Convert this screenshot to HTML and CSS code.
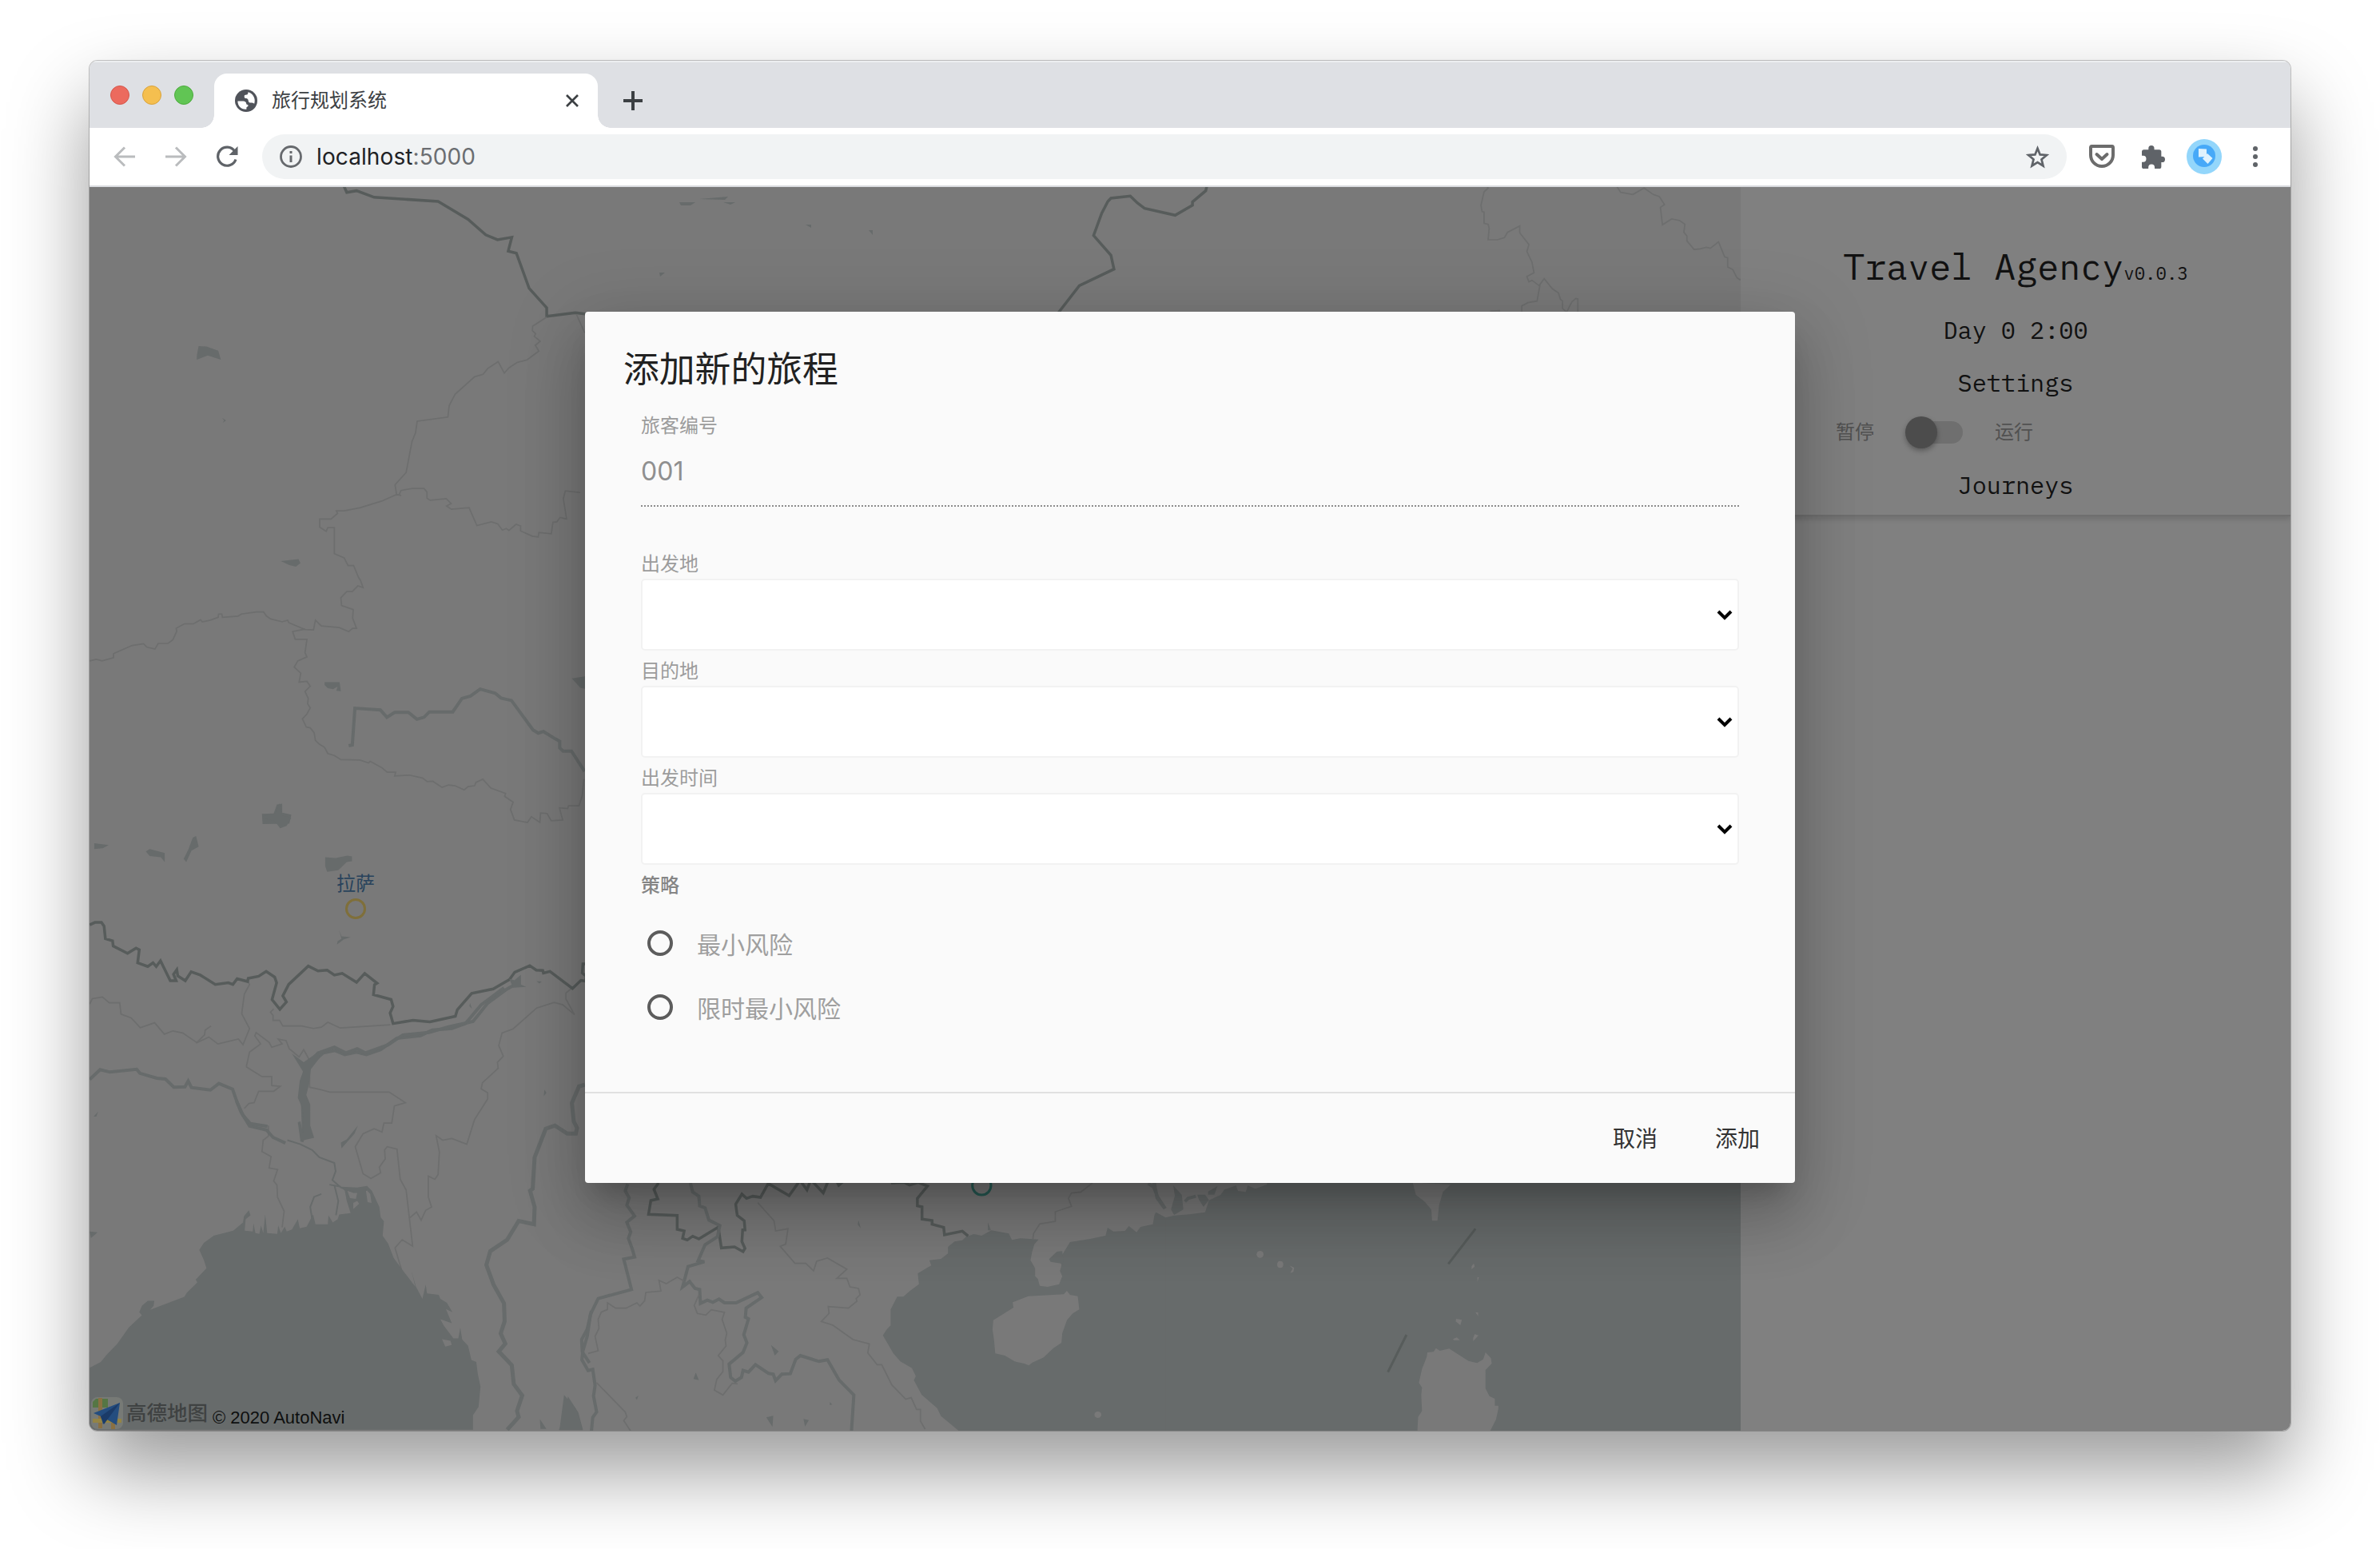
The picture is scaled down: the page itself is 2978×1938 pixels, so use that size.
FILE: index.html
```html
<!DOCTYPE html>
<html lang="zh-CN">
<head>
<meta charset="utf-8">
<title>旅行规划系统</title>
<link rel="stylesheet" href="styles.css">
</head>
<body>
<div class="window">
  <header class="tabstrip">
    <div class="lights"><i class="light red"></i><i class="light yellow"></i><i class="light green"></i></div>
    <div class="tab">
      <svg class="favicon" viewBox="0 0 28 28"><circle cx="14" cy="14" r="14" fill="#50535a"/><path d="M3.4 14.5h6.8c2.6.2 4 1.3 4 3.2 0 1.6 2 .6 2.400 2.300.2 1.500-2.200 1.200-2.200 3v1.700C8 25.400 3.300 20.500 3.400 14.500zM16.500 3.300c-.4 2.200-.2 2.900-1.900 3.200-2.300.3-2.800.2-2.900 2.300 0 1.700.5 2.200 2.500 2.300 2 .2 2.500 1.900 2.600 3.400.3 2.300 2.600 2 4.100 2 2 0 2.900.9 3.200 1.600C26.400 11.500 22.500 4.500 16.500 3.300z" fill="#fff"/></svg>
      <span class="tab-title">旅行规划系统</span>
      <svg class="close" viewBox="0 0 18 18"><path d="M2 2l14 14M16 2L2 16" stroke="#3c4043" stroke-width="2.700"/></svg>
    </div>
    <svg class="plus" viewBox="0 0 24 24"><path d="M12 0v24M0 12h24" stroke="#3c4043" stroke-width="4"/></svg>
  </header>
  <div class="toolbar">
    <svg class="nav" viewBox="0 0 28 28"><path d="M27 14H3M14 2.500L2.500 14 14 25.500" fill="none" stroke="#babcbe" stroke-width="3"/></svg>
    <svg class="nav" viewBox="0 0 28 28"><path d="M1 14h24M14 2.500L25.500 14 14 25.500" fill="none" stroke="#babcbe" stroke-width="3"/></svg>
    <svg class="nav" viewBox="0 0 28 28"><path d="M23.500 7A11.500 11.500 0 1 0 25 17.500" fill="none" stroke="#5f6368" stroke-width="3.200"/><path d="M27.500 1v11h-11z" fill="#5f6368"/></svg>
    <div class="omnibox">
      <svg class="info" viewBox="0 0 28 28"><circle cx="14" cy="14" r="12.500" fill="none" stroke="#66696d" stroke-width="2.800"/><path d="M14 12.500V21M14 7v3" stroke="#66696d" stroke-width="3"/></svg>
      <span class="url">localhost<span class="port">:5000</span></span>
      <svg class="star" viewBox="0 0 28 28"><path d="M14 3.500l3 7.500 8 .6-6.200 5.200 2 7.800L14 20.300l-6.800 4.300 2-7.800L3 11.600l8-.6z" fill="none" stroke="#5f6368" stroke-width="2.600"/></svg>
    </div>
    <svg class="pocket" viewBox="0 0 32 30"><path d="M3.500 2h25A1.700 1.700 0 0 1 30 3.700V13a14 14 0 0 1-28 0V3.700A1.700 1.700 0 0 1 3.500 2z" fill="none" stroke="#6c6c6c" stroke-width="4"/><path d="M9.500 12l6.500 6 6.500-6" fill="none" stroke="#6c6c6c" stroke-width="4" stroke-linecap="round" stroke-linejoin="round"/></svg>
    <svg class="puzzle" viewBox="0 0 28 28"><path d="M2.500 5H8V3.500a3.500 3.500 0 0 1 7 0V5h6a2.500 2.500 0 0 1 2.500 2.500v5.800h1a3.500 3.500 0 0 1 0 7h-1V25.500A2.500 2.500 0 0 1 21 28h-5.500v-1.500a3.800 3.800 0 0 0-7.600 0V28H2.500A2.500 2.500 0 0 1 0 25.500V20h1.500a3.800 3.800 0 0 0 0-7.600H0V7.500A2.500 2.500 0 0 1 2.500 5z" fill="#5f6368"/></svg>
    <svg class="avatar" viewBox="0 0 44 44"><circle cx="22" cy="22" r="22" fill="#93d6fb"/><circle cx="22" cy="21" r="14" fill="#47a9f8"/><path d="M15 12l10 .5v9.500l-10 .5z" fill="#dff2fd"/><path d="M26 18l6.500 6-6 7-6.500-6.500z" fill="#dff2fd"/></svg>
    <svg class="menu" viewBox="0 0 6 26"><g fill="#5f6368"><circle cx="3" cy="3" r="3"/><circle cx="3" cy="13" r="3"/><circle cx="3" cy="23" r="3"/></g></svg>
  </div>
  <main class="page">
    <div class="map">
      <svg class="map-art" viewBox="112 234 2066 1556">
        <!-- north-west -->
        <g transform="translate(100 230) scale(.40816 .5102)">
          <path class="border" d="M809 5l9 16 30-4 54 16 196 10 92 44 54 38 36 12 44-6-11 34 25 5 39 86 54 48v21l88-9 40 4"/>
          <path class="prov" d="M1431 327l-43 22-1 11 10 8-4 6 18 12-15 10 11 14-37 22-30 6-26 14-13 12-19-28-32 17-14 14-26 6-60 43-18 28-4 28-94 10-5 28-11 22-18 76-34 30 5 25 8-1 5-10 34-5h37l9 9v15l10 5 49-4 15 12-14 6 15 8 54-4 24 44 44-9 20 5 14 15 12-4 8 5 22-15 14 4v12l36 13 18 2 2-11 38 3 5-28 12-1 10-11 20 4-10-50 6-19 46 4"/>
          <path class="prov" d="M985 764L970 762 925 778 860 794 810 802 786 802 790 808 770 822 735 822 735 842 755 852 760 843 780 843 780 907 810 917 822 936 839 936 854 965 860 972 868 990 852 986 835 1000 818 1000 800 1015 802 1034 838 1044 836 1065 848 1090 836 1090 824 1098 795 1088 740 1084 722 1070 716 1094 690 1093 640 1076 637 1070 620 1074 585 1067 572 1060 563 1050 540 1050 495 1055 485 1060 437 1063 435 1055 425 1055 424 1063 400 1070 375 1074 370 1069 348 1079 320 1079 295 1090 297 1097 285 1118 270 1127 240 1127 230 1141 205 1136 195 1128 160 1132 103 1152 103 1162 68 1170 50 1166 30 1170"/>
          <path class="prov" d="M690 1092L652 1098 658 1112 660 1117 696 1117 690 1150 696 1160 668 1170 657 1185 677 1200 672 1222 696 1220 706 1232 690 1245 700 1262 698 1275 706 1285 696 1300 682 1312 694 1332 706 1334 718 1346 722 1365 734 1374 750 1382 760 1397 780 1402 800 1412 858 1413 885 1420 890 1416 926 1432 942 1443 968 1443 965 1452 1010 1450 1050 1457 1065 1466 1082 1465 1110 1480 1130 1474 1150 1476 1178 1486 1190 1478 1210 1476 1214 1468 1235 1460 1260 1482 1305 1495 1302 1502 1328 1516 1320 1534 1332 1560 1372 1566 1384 1552 1410 1566 1412 1543 1432 1544 1445 1562 1480 1560 1470 1530 1495 1532 1498 1525 1530 1525 1540 1500 1545 1460M1522 320L1548 366"/>
          <path class="river" d="M824 1378l11-2 8-90 78 4 20 18 24-12h42l26 17 22-5 16-13h72l28-33 26-6 30-17 46 10 18 12 32 6 66 72 16 8 16-4 36 18 14 6v16l10 8h26l40 50"/>
          <path class="water" d="M364 398l24 1 36 10 8 22-40-10-34 10 1-13zM436 574l12 6-10 6 4-6zM616 925l54-5 6 10-14 9-20-4zM750 1222h46l4 22-14-1 4-10-14 6-16-2-10-8zM1508 1213l40-5v30l-14-2zM558 1545l36-1 10-22 16-2v22l28 5-6 22-82 1z"/>
        </g>
        <!-- south-west -->
        <g transform="translate(100 1000) scale(.40816 .5102)">
          <path class="prov" d="M30 502l8-13 31-4 21 14h32l4 28 31 9 28 24 44-12 30 28 26-8 30 5 44 24 36-14 28 17 63-12 14 14 20-40-24-36 8-48 16-24-8-12M356 598l26-20 2-12 18-10M594 514l-10 8 8 8v12h20l10 14h58l36 6 24-3 20-12 38 14 154-8M510 656l10-36 34-20-18-20 4-8 40 24 8 12 32-8-12-12 24 4 10 20 30 20 14-18 18 26v66l34 6 28 6h182l50 26-34 8-8 42h-24l-6 22-24-8-34 12-24 32 24 66 24 12 30-14-4-14 18-20-2-22 8-8 30 6 10 74 18 26 20 138-32-16-22 20 20 54M510 656l48 24h30v22l26 2-20 12h-46l-14 28-16 2-14 12M578 800v26l-16 10-4 28 28 12-6 28 26 4-12 28 10 10 2 30 20 34-6 40M1012 1026L1032 1012 1046 1032 1060 1008 1078 1000 1068 975 1068 924 1088 932 1098 920 1102 865 1092 825 1112 836 1140 832 1186 846 1210 785 1250 735 1250 720 1230 710 1234 695 1282 660 1280 645 1298 630 1284 604 1294 573 1328 563 1400 512 1454 498 1480 504 1516 528 1490 490 1490 475 1510 462"/>
          <path class="border" d="M30 308l16-6h20l8 9 4 31 22 5 2 13 44 18 26-13 10 4-5 32 31 9 16-9 10 9 13-14 30 49h18l-8-16 10-11 3 15 23 12 18-22 28 8 46 23 40-4 14 4 13-14 32 7 2-8 32-5 23-12 26 14 6 14-14 41 24 24 20-18-11-15 18-28 60-45 30 12 28-2 22 12 24-4 44 22 25-22 38 24-8 4-3 24 54 12 6 17-9 16 9 26 61-8 52 4 78-14 6-16 44-40 66-11 50-23 16-18 46-16 20 11 20 1 2 6 20-4 69 42 26-20 14 2 2-12-12-8 2-22h20"/>
          <path class="river" d="M30 687l32-24 30 6 82-7 10 10 52 12 26 2 26 20 34-1 10-14 10 16 40 4 18 2 26-16 42 14 14 32 12 24 26 34 52 10 20 18 38 14M680 840l6-16-4-92 8-80 30-12 26-18 36-6 30 10 36-6 30 6 44-12 50-28 72-6 36-14 60-4 42-12 48-46 44-26 26-16"/>
          <path class="river" d="M710 640L730 622 780 608 815 622 850 612 875 622 945 602 990 578 1070 572 1130 558 1205 545 1250 500 1310 465 1340 452"/>
          <path class="river" d="M480 740L500 775 522 795 575 802"/>
          <path class="water" d="M650 624L686 645 730 620 735 634 708 662 702 700 694 725 706 748 706 800 718 830 676 838 668 792 676 790 684 820 686 765 668 732 674 690 684 668zM1316 440l16 4 20-14v24l16 6-40 2z"/>
          <path class="stream" d="M636 836l40 10 36 14 22 18 46 14 4 20-10 22 26 18 40 12 40-6M780 946L792 985 785 1020M765 945L800 950M740 968L718 975 706 1000 712 1030"/>
          <path class="water" d="M30 1394L64 1380 82 1362 115 1335 150 1295 190 1265 182 1258 190 1242 208 1230 228 1230 226 1242 215 1252 320 1220 328 1210 360 1185 355 1178 388 1150 380 1130 366 1105 380 1088 410 1070 470 1058 500 1038 503 1022 518 1008 523 1020 508 1030 505 1058 530 1060 532 1040 538 1064 550 1066 555 1045 562 1064 568 1018 574 1064 605 1066 608 1045 616 1064 628 1048 634 1060 650 1055 668 1030 674 1052 695 1048 715 1018 722 1042 760 1042 762 1020 775 1038 790 1030 795 1018 830 1015 818 985 812 960 800 950 850 952 880 948 895 960 918 1000 922 1025 932 1035 928 1070 945 1090 962 1125 985 1150 1028 1195 1016 1155 1030 1195 1050 1225 1060 1190 1064 1212 1100 1215 1105 1225 1125 1235 1142 1258 1122 1250 1140 1285 1105 1275 1115 1290 1145 1322 1160 1322 1166 1296 1172 1325 1190 1340 1200 1375 1215 1380 1220 1410 1228 1440 1222 1490 1205 1510 1205 1546 30 1546zM876 956L890 968 894 990 882 988zM820 960L828 978 846 980 850 966zM838 1005L856 992 850 985 838 990z" fill-rule="evenodd"/>
          <path class="land" d="M1110 1324l26 4 4 10-20 4z"/>
          <path class="water" d="M44 108l44 4-18 8-26 2zM202 128l12-6 46 10v22l-12-12-34-3zM346 94l10-4 8 26-22 10-16 28-8-8 14-22zM752 142l32 2 36-6 14 2v12l-16 2-26 20-34 4-6-14zM794 320l8 16 28 2-22 6-20 12 2-8 12-6zM560 40l36-2 16-28 8 30 28 5-14 20-20 6-18-18-32-6zM1400 446l16 1-8 5zM1196 500l6 14-8-7zM42 778l14-12-6 12zM800 842l18-8 34-34-10 20-40 36zM1424 712l6 8-8 8zM30 1060l24 2-20 14zM1496 1464L1528 1504 1542 1546H1468L1488 1518zM1410 1520l20 24h-18z"/>
          <path class="river wide" d="M1548 700L1530 704 1508 745 1514 790 1524 806 1520 820 1494 820 1456 800 1428 808 1394 878 1388 955 1380 960 1394 1000 1392 1042 1345 1034 1310 1080 1258 1108 1246 1142 1268 1190 1300 1236 1302 1280 1290 1310 1304 1335 1284 1354 1324 1388 1330 1434 1356 1462 1340 1500 1345 1515 1310 1546"/>
          <path class="river" d="M1568 1255L1555 1300 1538 1325 1540 1355 1562 1382"/>
        </g>
        <!-- gulf and Hainan -->
        <g transform="translate(700 1460) scale(.4847 .3333)">
          <path class="water" d="M1620 180L1568 192 1540 170 1536 180 1532 215 1500 225 1490 245 1470 222 1460 240 1430 242 1415 228 1410 258 1370 270 1318 282 1302 320 1292 345 1296 370 1292 390 1298 410 1290 440 1260 450 1240 446 1235 420 1228 410 1228 380 1216 350 1220 320 1226 290 1237 272 1190 268 1168 274 1160 250 1115 238 1090 258 1070 252 1050 262 1040 275 1020 280 1003 300 1003 325 985 345 955 350 960 370 947 380 925 400 928 440 905 465 888 487 872 487 855 535 855 595 845 610 835 632 850 670 862 700 880 730 910 755 920 785 915 800 935 855 975 905 985 935 1032 992 1620 992z"/>
          <path class="land" d="M1120 575L1172 528 1170 508 1210 485 1275 480 1302 478 1310 465 1318 480 1338 485 1342 535 1325 550 1310 575 1298 625 1296 660 1275 680 1250 715 1220 735 1212 745 1200 738 1175 730 1150 708 1125 700 1122 650 1118 610z"/>
          <path class="water" d="M1264 346l20-28 14-2 4 48-18-4-16-4z"/>
          <ellipse class="land" cx="1390" cy="930" rx="9" ry="12"/>
          <path class="border" d="M256 60l-12 24 10 36-18 6-6 52 74 4v52l18 6-4 28 12 6 14-14 16 10 50-44 8 78 34-4 22 18 5-12-8-26 2-44h6l-2-34-18-20-4-42 16-38 12 16 16-8 20 4 20-52 54 46 28-58 18 36 10-38 32 50 14-50 18-3 8 24 22-28 10 8 10-12M856 60l34-2 14 10 22-10 24 14-26 46v28l12 4v46l26 5v14l30 12 2 28 46-14 15 18"/>
          <path class="river" d="M176 64l-6 26 10 26-6 28 20 40-20 24 10 36-6 24 10 40 6 30-28 8 20 114-86 34-20 60-8 80-12 60-2 30 16 40 12-4 6 60-4 40 8 60-10 20-4 60-6 30M338 60L344 94 360 110 362 146 376 154 386 200 414 220 408 262 376 292 358 352 374 356 332 374 318 450 336 430 350 456 362 460 364 512 382 500 396 508 412 496 426 510 456 510 512 472 522 490 482 530 480 564 488 570 476 630 484 660 474 696 438 740 442 790 454 804 470 790 474 764 488 770 506 742 540 775 552 778 558 802 574 778 596 776 610 722 622 708 670 730 692 724 722 800 760 856 754 990M1520 62l14 14 10 36 20 44"/>
          <path class="prov" d="M512 134l42 68 4 38 32-8-6 58-14 8 38 64h28l20 28 8-36 28-12 50 42-26 34h26l8 32 22 6 4 24-10 14 2 10-22 26-52-6 2 26-20 30 30 14 52 54 42 16-4 34 24 44h12l26 76 36 54 14-6 14 44h10v44l12 30M1376 60l-30 34-24 4-8 20 8 30-42 20v36l-40 10-16 36-2 22M360 480l-12 40 8 30 22 6 14-20 34 10-6 26 12 52-4 26 2 22-20 36 12 20v40l-16 30-6 40 22 18 24-44 14 2M74 700l26-10-8-54 10-30-2-34L108 545 124 535 124 510 145 530 172 530 200 510 208 522 220 502 223 471 262 466 257 426 276 438 304 414 322 428M96 810l74 110 4 18-8 14 18 40"/>
          <path class="water" d="M772 200l6 30-8-14zM546 668l20 24-10 16zM352 772l8 28-14-4zM534 940l18-6-2 42zM630 946l14 4-10 24zM12 856l30 50 18 82H0zM698 882l6 10-6 2zM204 858l-4 16-4-8zM1106 208l8 30h-8z"/>
          <ellipse cx="1090" cy="70" rx="24" ry="35" fill="none" stroke="#285c55" stroke-width="3" vector-effect="non-scaling-stroke"/>
        </g>
        <!-- South China Sea -->
        <g transform="translate(1440 1460) scale(.4847 .3333)">
          <path class="water" d="M1523 0V992H38V190L60 182 100 178 140 170 150 125 180 105 190 85 220 70 225 90 245 94 250 70 270 82 300 66V0z"/>
          <path class="water" d="M58 70L80 105 84 160 60 180 52 160 62 108zM120 104h20l10 20-14 26-12-28zM148 92l24-20-8 32h-16z"/>
          <path class="land" d="M676 58L684 104 708 132 724 160 726 202H740L744 144 754 94 774 66zM714 696l16-2 6-14 10 10 24-8 50 46 22 8 16-14 6-26 14 22 2 20-16 24v70l10 28 14 10v26h9v12l-6 40-16 46H688l2-56 10-22-2-60 2-28-8-18 8-52 12-44z"/>
          <g class="land"><ellipse cx="282" cy="328" rx="9" ry="13"/><ellipse cx="334" cy="366" rx="8" ry="13"/><path d="M358 370l12 8-2 16-8 4 6-16zM834 362l2 12-8 10v-12zM843 414h4l-4 18zM838 546h7v14zM788 570l15 4-4 20-12-14zM780 646l10-6 8 10h-16zM836 628l10 4-14 22v-12z"/></g>
          <path class="border dash" d="M838 232l-70 132M660 630l-48 140"/>
          <path class="river" d="M4 66l6 0 6 50 20 40M88 130L96 118 116 110"/>
        </g>
        <!-- north -->
        <g transform="translate(1200 230) scale(.6378 .3333)">
          <path class="border" d="M486 10l-2 16-26 42v12l-34 38-60-26-14-20-14-26-38 8-6 12-12 44-16 84 34 74 6 52-68 62-42 104"/>
          <path class="prov" d="M1036 10l2 6-8 14-6 50 2 24 4 2v42l8 4 2 14-2 44h18l14-8 6-20 24-24v26l18 44-4 26 10 40 4 40-14 14 4 20 6-6 14 20 10-26 16 38 12 16 4 24 4 6v28l8 14 10-38 8-14 4 2v54M1140 376l-6 64-18 6-12 12v26M1042 478l18-2v10M1290 8l8 24 24 8 22-24 18 24 12 8 10 30-8 10 4 66 18-22 16 6 10 14-2 30 6 14v18l14 32 12-2 12-6 8 4 16-24 12 56 6 4v34l10 10 8 30 6 8 12-14"/>
        </g>
        <path class="water" d="M850 253h20l-6 4h-12zM875 249l36-3-4 4zM905 253h15l-6 3zM825 341h7l-6 5zM1008 281h7v4zM1087 288h5v6z"/>
      </svg>
      <div class="pin"><span>拉萨</span><i></i></div>
      <div class="credit">
        <svg viewBox="0 0 40 40"><rect width="40" height="40" rx="8" fill="#777a76"/><path d="M6 2h15v11H2V6z" fill="#557644"/><path d="M9 1h5v38H9zM25 25h5v15h-5z" fill="#8a7042"/><path d="M2 27h36v5H2z" fill="#948444"/><path d="M3 20L36 7l-4 28-12-7-5 6-3-10z" fill="#244d7f"/><path d="M36 7L12 24l4 10z" fill="#1b3b68"/></svg>
        <span class="brand">高德地图</span><span class="copy">© 2020 AutoNavi</span>
      </div>
    </div>
    <aside class="side">
      <h1>Travel Agency<small>v0.0.3</small></h1>
      <p class="line">Day 0 2:00</p>
      <p class="line settings">Settings</p>
      <div class="switch-row"><span>暂停</span><span class="switch"><i></i></span><span>运行</span></div>
      <p class="line journeys">Journeys</p>
    </aside>
    <div class="overlay">
      <section class="dialog">
        <h2>添加新的旅程</h2>
        <div class="form">
          <div class="label">旅客编号</div>
          <div class="value">001</div>
          <div class="label">出发地</div>
          <div class="select"><svg viewBox="0 0 20 14"><path d="M2 3l8 8 8-8"/></svg></div>
          <div class="label">目的地</div>
          <div class="select"><svg viewBox="0 0 20 14"><path d="M2 3l8 8 8-8"/></svg></div>
          <div class="label">出发时间</div>
          <div class="select"><svg viewBox="0 0 20 14"><path d="M2 3l8 8 8-8"/></svg></div>
          <div class="label strong">策略</div>
          <div class="radio"><i></i>最小风险</div>
          <div class="radio"><i></i>限时最小风险</div>
        </div>
        <footer><span>取消</span><span>添加</span></footer>
      </section>
    </div>
  </main>
</div>
</body>
</html>
```
FILE: styles.css
```css
* { box-sizing: border-box; }
body {
  margin: 0;
  padding: 76px 112px 0;
  height: 1938px;
  overflow: hidden;
  background: #fff;
  font-family: Inter, "Noto Sans CJK SC", sans-serif;
}
svg { display: block; flex: none; }
h1, h2, p { margin: 0; font-weight: 400; }
.window {
  width: 2754px;
  height: 1714px;
  border-radius: 10px;
  overflow: hidden;
  display: flex;
  flex-direction: column;
  box-shadow: 0 0 0 1px rgba(0,0,0,.22), 0 50px 100px rgba(0,0,0,.4);
}
.tabstrip {
  height: 84px;
  background: #dee0e4;
  display: flex;
  align-items: flex-end;
  box-shadow: inset 0 2px 0 #eceef0;
}
.lights { display: flex; gap: 16px; padding: 0 26px 29px; width: 156px; }
.light { width: 24px; height: 24px; border-radius: 50%; border: 1px solid; flex: none; }
.red { background: #ec6a5e; border-color: #d5574b; }
.yellow { background: #f5bf4f; border-color: #d8a23c; }
.green { background: #61c554; border-color: #4cab3c; }
.tab {
  position: relative;
  width: 480px;
  height: 68px;
  border-radius: 16px 16px 0 0;
  background: #fff;
  display: flex;
  align-items: center;
  padding: 0 23px 0 26px;
}
.tab::before, .tab::after {
  content: "";
  position: absolute;
  bottom: 0;
  width: 16px;
  height: 16px;
}
.tab::before { left: -16px; background: radial-gradient(circle at 0 0, transparent 15.5px, #fff 16px); }
.tab::after { right: -16px; background: radial-gradient(circle at 100% 0, transparent 15.5px, #fff 16px); }
.favicon { width: 28px; height: 28px; }
.tab-title { margin-left: 18px; font-size: 24px; line-height: 36px; color: #3c4043; flex: 1; }
.close { width: 18px; height: 18px; }
.plus { width: 24px; height: 24px; margin: 0 0 22px 32px; }
.toolbar {
  height: 74px;
  background: #fff;
  border-bottom: 2px solid #dadce0;
  display: flex;
  align-items: center;
  padding-left: 30px;
}
.nav { width: 28px; height: 28px; margin-right: 36px; }
.omnibox {
  width: 2258px;
  height: 56px;
  margin-left: -6px;
  border-radius: 28px;
  background: #f1f3f4;
  display: flex;
  align-items: center;
  padding: 0 22px;
}
.info { width: 28px; height: 28px; }
.url { margin-left: 18px; font-size: 28px; letter-spacing: .1px; color: #202124; flex: 1; }
.port { color: #6a6d71; }
.star { width: 29px; height: 29px; }
.pocket { width: 32px; height: 30px; margin-left: 28px; }
.puzzle { width: 29px; height: 29px; margin-left: 34px; }
.avatar { width: 44px; height: 44px; margin-left: 27px; }
.menu { width: 6px; height: 26px; margin-left: 39px; }
.page { position: relative; height: 1556px; display: flex; background: #808080; }
.map { position: relative; width: 2066px; height: 1556px; background: #797979; }
.map-art { width: 2066px; height: 1556px; }
.border, .prov, .river, .stream { fill: none; vector-effect: non-scaling-stroke; }
.border { stroke: #575c5b; stroke-width: 3.5px; }
.dash { stroke-width: 3px; }
.prov { stroke: #6d6e6e; stroke-width: 1.7px; }
.river { stroke: #676b6b; stroke-width: 4px; }
.wide { stroke-width: 5px; }
.stream { stroke: #676b6b; stroke-width: 2px; }
.water { fill: #676b6b; }
.land { fill: #797979; }
.pin {
  position: absolute;
  left: 297px;
  top: 854px;
  width: 72px;
  display: flex;
  flex-direction: column;
  align-items: center;
  font-size: 24px;
  line-height: 36px;
  color: #28435c;
}
.pin i { width: 26px; height: 26px; border: 3px solid #7f6f3a; border-radius: 50%; }
.credit {
  position: absolute;
  left: 2px;
  bottom: 2px;
  display: flex;
  align-items: center;
}
.credit svg { width: 40px; height: 40px; }
.brand { margin-left: 4px; width: 102px; font-size: 25.5px; line-height: 40px; font-weight: 500; color: #3f4242; }
.copy { margin-left: 6px; height: 40px; padding-top: 8px; font: 22px/36px "Liberation Sans", sans-serif; color: #0e0f0f; white-space: nowrap; }
.side {
  width: 688px;
  height: 412px;
  border-bottom: 2px solid #6f6f6f;
  box-shadow: 0 4px 6px rgba(0,0,0,.12);
  padding-top: 69px;
  text-align: center;
  font-family: "IBM Plex Mono", "Liberation Mono", monospace;
  color: #111;
}
.side h1 { font-size: 45px; line-height: 60px; }
.side small { font-size: 22.4px; }
.side .line { font-size: 30.2px; line-height: 40px; }
.side h1 + .line { margin-top: 21px; }
.side .settings { margin-top: 26px; }
.switch-row {
  display: flex;
  align-items: center;
  height: 48px;
  margin: 16px 0 0 119px;
  font: 24px/36px "Noto Sans CJK SC", sans-serif;
  color: #515151;
}
.switch { width: 68px; height: 28px; margin: 4px 40px 0 43px; border-radius: 14px; background: #6f6f6f; display: flex; align-items: center; }
.switch i { width: 40px; height: 40px; margin-left: -4px; border-radius: 50%; background: #4c4c4c; box-shadow: 0 3px 6px rgba(0,0,0,.3); flex: none; }
.side .journeys { margin-top: 24px; }
.overlay { position: absolute; inset: 0; display: flex; justify-content: center; align-items: flex-start; padding-top: 156px; }
.dialog {
  width: 1514px;
  height: 1090px;
  border-radius: 4px;
  background: #fafafa;
  display: flex;
  flex-direction: column;
  box-shadow: 0 22px 30px -14px rgba(0,0,0,.2), 0 48px 76px 6px rgba(0,0,0,.14), 0 18px 92px 16px rgba(0,0,0,.12);
}
.dialog h2 { padding: 39px 0 0 48px; font-size: 44.8px; line-height: 66px; color: #212121; }
.form { flex: 1; padding: 12px 70px 0; }
.label { height: 44px; padding-top: 8px; font-size: 24px; line-height: 36px; color: #9c9c9c; }
.value { height: 83px; margin-bottom: 46px; padding-top: 19px; font-size: 32px; line-height: 40px; color: #8f8f8f; border-bottom: 2px dotted #8c8c8c; }
.select {
  height: 90px;
  border: 2px solid #f2f2f2;
  border-radius: 5px;
  background: #fff;
  display: flex;
  align-items: center;
  justify-content: flex-end;
  padding-right: 6px;
}
.select svg { width: 20px; height: 14px; fill: none; stroke: #000; stroke-width: 4; }
.strong { color: #858585; font-weight: 500; height: 58px; }
.radio { display: flex; align-items: center; height: 80px; font-size: 30px; color: #9f9f9f; }
.radio i { width: 32px; height: 32px; margin: 0 30px 0 8px; border: 4px solid #5c5c5c; border-radius: 50%; }
.dialog footer {
  height: 114px;
  border-top: 2px solid #e0e0e0;
  display: flex;
  align-items: center;
  justify-content: flex-end;
  gap: 72px;
  padding: 0 44px 2px 0;
  font-size: 28px;
  color: #333;
}
```
